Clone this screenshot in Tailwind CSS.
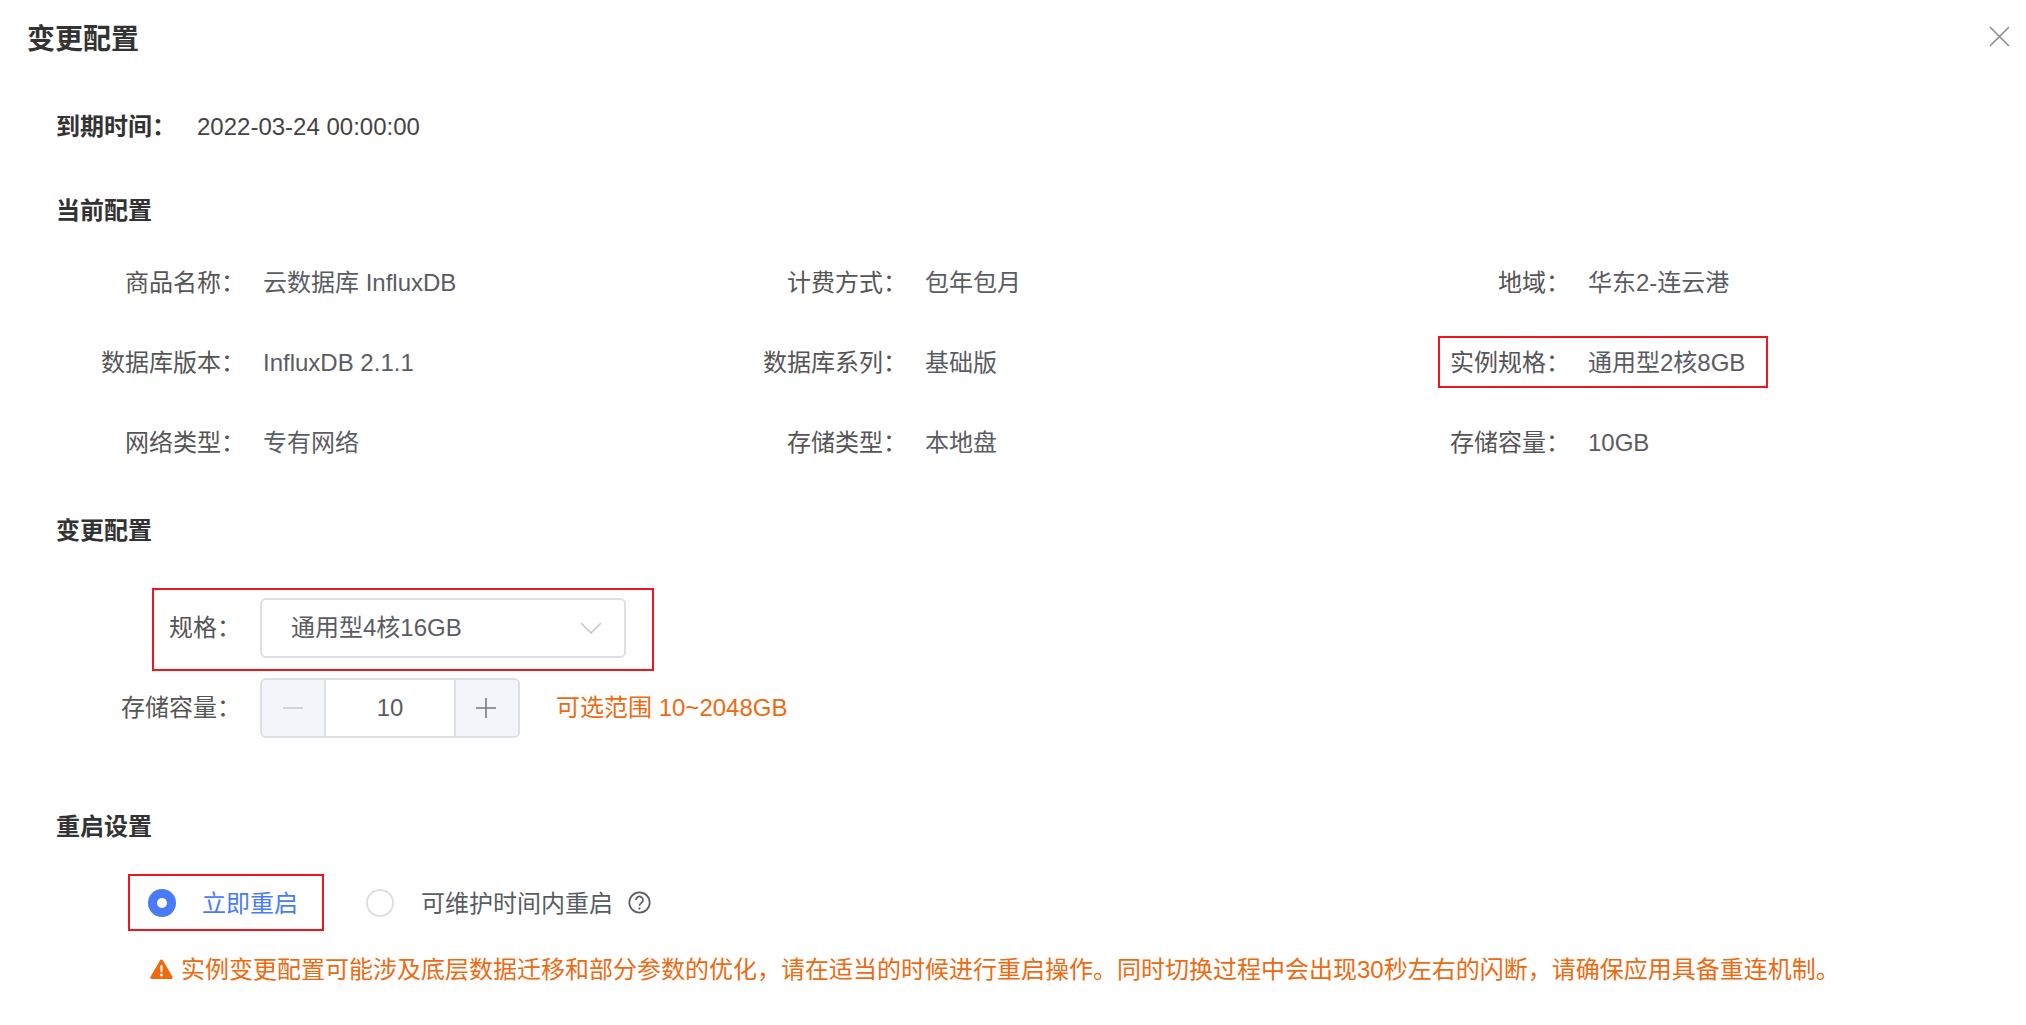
<!DOCTYPE html>
<html lang="zh-CN">
<head>
  <meta charset="UTF-8" />
  <title>变更配置</title>
  <script src="https://cdn.jsdelivr.net/npm/@tailwindcss/browser@4"></script>
</head>
<body class="bg-white font-['Liberation_Sans','Noto_Sans_CJK_SC',sans-serif] text-[24px] text-[#5a5c63]">
<div class="w-[2026px] h-[1025px] overflow-hidden">

  <!-- header -->
  <header class="h-[78px] pl-[27px] pr-[16px] pt-[1px] flex items-center justify-between">
    <h1 class="text-[28px] font-bold text-[#333]">变更配置</h1>
    <svg class="w-[21px] h-[21px] mb-[7px]" viewBox="0 0 21 21" fill="none" stroke="#8a8d94" stroke-width="1.6"><path d="M1 1l19 19M20 1L1 20" /></svg>
  </header>

  <main class="pl-[56px]">
    <div class="h-[40px] mt-[29px] flex items-center">
      <span class="w-[141px] font-bold text-[#333]">到期时间：</span>
      <span class="text-[#444]">2022-03-24 00:00:00</span>
    </div>

    <h2 class="h-[40px] mt-[44px] flex items-center font-bold text-[#333]">当前配置</h2>

    <!-- current config -->
    <div class="mt-[12px] grid grid-cols-[663px_662px_662px] auto-rows-[80px] items-center">
      <div class="flex"><span class="w-[189px] text-right text-[#555]">商品名称：</span><span class="ml-[18px]">云数据库 InfluxDB</span></div>
      <div class="flex"><span class="w-[188px] text-right text-[#555]">计费方式：</span><span class="ml-[18px]">包年包月</span></div>
      <div class="flex"><span class="w-[189px] text-right text-[#555]">地域：</span><span class="ml-[18px]">华东2-连云港</span></div>

      <div class="flex"><span class="w-[189px] text-right text-[#555]">数据库版本：</span><span class="ml-[18px]">InfluxDB 2.1.1</span></div>
      <div class="flex"><span class="w-[188px] text-right text-[#555]">数据库系列：</span><span class="ml-[18px]">基础版</span></div>
      <div class="flex relative">
        <span class="w-[189px] text-right text-[#555]">实例规格：</span><span class="ml-[18px]">通用型2核8GB</span>
        <div class="absolute left-[57px] top-[-9px] w-[330px] h-[52px] border-2 border-[#f5141e]"></div>
      </div>

      <div class="flex"><span class="w-[189px] text-right text-[#555]">网络类型：</span><span class="ml-[18px]">专有网络</span></div>
      <div class="flex"><span class="w-[188px] text-right text-[#555]">存储类型：</span><span class="ml-[18px]">本地盘</span></div>
      <div class="flex"><span class="w-[189px] text-right text-[#555]">存储容量：</span><span class="ml-[18px]">10GB</span></div>
    </div>

    <h2 class="h-[40px] mt-[28px] flex items-center font-bold text-[#333]">变更配置</h2>

    <!-- spec select -->
    <div class="mt-[37px] ml-[96px] w-[502px] h-[83px] border-2 border-[#f5141e] pb-[3px] flex items-center">
      <span class="w-[87px] text-right text-[#555]">规格：</span>
      <div class="ml-[19px] w-[366px] h-[60px] border-2 border-[#dcdfe6] rounded-[6px] pl-[29px] pr-[22px] flex items-center justify-between">
        <span>通用型4核16GB</span>
        <svg class="w-[22px] h-[12px]" viewBox="0 0 22 12" fill="none" stroke="#c3c7cf" stroke-width="1.6"><path d="M1 1l10 10L21 1" /></svg>
      </div>
    </div>

    <!-- storage stepper -->
    <div class="mt-[7px] flex items-center">
      <span class="w-[185px] text-right text-[#555]">存储容量：</span>
      <div class="ml-[19px] w-[260px] h-[60px] border-2 border-[#dcdfe6] rounded-[6px] flex overflow-hidden">
        <div class="w-[64px] bg-[#f4f5fa] border-r-2 border-[#dcdfe6] flex items-center justify-center">
          <svg class="w-[20px] h-[20px]" viewBox="0 0 20 20" stroke="#c3c7cf" stroke-width="1.6"><path d="M0 10h20" /></svg>
        </div>
        <div class="flex-1 flex items-center justify-center">10</div>
        <div class="w-[64px] bg-[#f4f5fa] border-l-2 border-[#dcdfe6] pr-[2px] flex items-center justify-center">
          <svg class="w-[20px] h-[20px]" viewBox="0 0 20 20" stroke="#777a82" stroke-width="1.6"><path d="M0 10h20M10 0v20" /></svg>
        </div>
      </div>
      <span class="ml-[36px] text-[#ee6a10]">可选范围 10~2048GB</span>
    </div>

    <h2 class="h-[40px] mt-[69px] flex items-center font-bold text-[#333]">重启设置</h2>

    <!-- restart options -->
    <div class="mt-[27px] ml-[72px] h-[57px] flex items-center">
      <div class="w-[196px] h-[57px] border-2 border-[#f5141e] pl-[18px] flex items-center">
        <span class="w-[28px] h-[28px] rounded-full bg-[#4a7bf7] flex items-center justify-center"><span class="w-[10px] h-[10px] rounded-full bg-white"></span></span>
        <span class="ml-[26px] pt-[2px] text-[#4a7bf7]">立即重启</span>
      </div>
      <span class="ml-[42px] w-[28px] h-[28px] rounded-full border-2 border-[#dcdfe6]"></span>
      <span class="ml-[27px] pt-[2px]">可维护时间内重启</span>
      <svg class="ml-[15px] w-[23px] h-[23px]" viewBox="0 0 23 23" fill="none" stroke="#5a5c63" stroke-width="1.7">
        <circle cx="11.5" cy="11.5" r="10.2" />
        <path d="M8 9a3.500 3.500 0 1 1 5.400 2.900c-1.300.9-1.900 1.400-1.900 2.800" />
        <circle cx="11.500" cy="17.600" r="1.100" fill="#5a5c63" stroke="none" />
      </svg>
    </div>

    <div class="mt-[18px] ml-[94px] h-[40px] flex items-center text-[#ee6a10] whitespace-nowrap">
      <svg class="w-[23px] h-[20px]" viewBox="0 0 23 20"><path fill-rule="evenodd" fill="#ee6a10" d="M11.5 0.5c.6 0 1.1.3 1.4.8l9.6 16.4c.6 1-.1 2.3-1.4 2.3H1.9c-1.3 0-2-1.3-1.4-2.3L10.100 1.300c.3-.5.8-.8 1.400-.8zM10.300 6.500l.3 6.800h1.800l.3-6.800zM11.500 14.600a1.400 1.400 0 1 0 0 2.800 1.400 1.400 0 0 0 0-2.800z" /></svg>
      <span class="ml-[8px] pt-[2px]">实例变更配置可能涉及底层数据迁移和部分参数的优化，请在适当的时候进行重启操作。同时切换过程中会出现30秒左右的闪断，请确保应用具备重连机制。</span>
    </div>
  </main>
</div>
</body>
</html>
